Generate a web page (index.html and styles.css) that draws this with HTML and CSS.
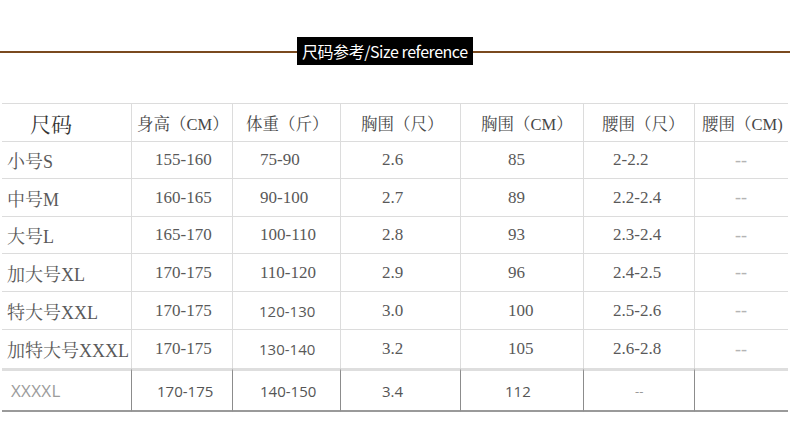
FILE: index.html
```html
<!DOCTYPE html>
<html lang="zh-CN">
<head>
<meta charset="utf-8">
<title>尺码参考</title>
<link rel="stylesheet" href="styles.css">
</head>
<body>
<div class="title-bar">
  <span class="rule rule-left"></span>
  <span class="title">尺码参考/Size reference</span>
  <span class="rule rule-right"></span>
</div>
<table class="size-table">
  <colgroup>
    <col class="w0"><col class="w1"><col class="w2"><col class="w3"><col class="w4"><col class="w5"><col class="w6">
  </colgroup>
  <thead>
    <tr>
      <th class="big">尺码</th>
      <th>身高（CM）</th>
      <th>体重（斤）</th>
      <th>胸围（尺）</th>
      <th>胸围（CM）</th>
      <th>腰围（尺）</th>
      <th>腰围（CM)</th>
    </tr>
  </thead>
  <tbody>
    <tr class="r-a"><td>小号S</td><td>155-160</td><td>75-90</td><td>2.6</td><td>85</td><td>2-2.2</td><td class="dash">--</td></tr>
    <tr class="r-b"><td>中号M</td><td>160-165</td><td>90-100</td><td>2.7</td><td>89</td><td>2.2-2.4</td><td class="dash">--</td></tr>
    <tr class="r-a"><td>大号L</td><td>165-170</td><td>100-110</td><td>2.8</td><td>93</td><td>2.3-2.4</td><td class="dash">--</td></tr>
    <tr class="r-b"><td>加大号XL</td><td>170-175</td><td>110-120</td><td>2.9</td><td>96</td><td>2.4-2.5</td><td class="dash">--</td></tr>
    <tr class="r-b"><td>特大号XXL</td><td>170-175</td><td class="sans">120-130</td><td>3.0</td><td>100</td><td>2.5-2.6</td><td class="dash">--</td></tr>
    <tr class="r-b r-pre"><td>加特大号XXXL</td><td>170-175</td><td class="sans">130-140</td><td>3.2</td><td>105</td><td>2.6-2.8</td><td class="dash">--</td></tr>
    <tr class="last"><td class="faint">XXXXL</td><td>170-175</td><td>140-150</td><td>3.4</td><td>112</td><td class="ldash">--</td><td></td></tr>
  </tbody>
</table>
</body>
</html>
```

FILE: styles.css
```css
html, body {
  margin: 0;
  padding: 0;
  background: #ffffff;
}

body {
  width: 790px;
  height: 444px;
  overflow: hidden;
}

.title-bar {
  display: flex;
  align-items: center;
  padding-top: 37px;
  height: 28px;
}

.rule {
  height: 2px;
  margin-top: 2px;
  background: #7a4a1f;
}

.rule-left {
  width: 297px;
}

.rule-right {
  flex: 1;
}

.title {
  display: flex;
  align-items: center;
  height: 28px;
  padding: 0 5px 0 5px;
  background: #000000;
  color: #ffffff;
  font-family: "Noto Sans CJK SC", "Noto Sans", sans-serif;
  font-size: 16px;
  letter-spacing: -0.45px;
  white-space: nowrap;
}

.size-table {
  margin: 38px 0 0 2px;
  width: 786px;
  table-layout: fixed;
  border-collapse: separate;
  border-spacing: 0;
  border-top: 1px solid #dcdcdc;
  font-family: "Liberation Serif", "Noto Serif CJK SC", "Noto Sans CJK SC", serif;
  color: #595959;
}

.w0 { width: 130px; }
.w1 { width: 101px; }
.w2 { width: 108px; }
.w3 { width: 120px; }
.w4 { width: 123px; }
.w5 { width: 111px; }
.w6 { width: 93px; }

.size-table th,
.size-table td {
  box-sizing: border-box;
  padding: 0;
  text-align: left;
  vertical-align: middle;
  white-space: nowrap;
  border-bottom: 1px solid #dcdcdc;
  border-right: 1px solid #dcdcdc;
}

.size-table th:last-child,
.size-table td:last-child {
  border-right: none;
}

.size-table th {
  height: 38px;
  font-weight: normal;
  font-size: 16.5px;
  color: #474747;
}

.size-table th.big {
  font-size: 21px;
  color: #333333;
}

.size-table th:nth-child(1) { padding-left: 28px; }
.size-table th:nth-child(2) { padding-left: 5px; }
.size-table th:nth-child(3) { padding-left: 13px; }
.size-table th:nth-child(4) { padding-left: 20px; }
.size-table th:nth-child(5) { padding-left: 20px; }
.size-table th:nth-child(6) { padding-left: 18px; }
.size-table th:nth-child(7) { padding-left: 7px; }

.size-table td {
  font-size: 17px;
}

.size-table tr.r-a td { height: 37px; }
.size-table tr.r-b td { height: 38px; }
.size-table tr.r-pre td { border-bottom: none; }

.size-table td:nth-child(1) { padding-left: 5px; font-size: 18px; }
.size-table td:nth-child(2) { padding-left: 23px; }
.size-table td:nth-child(3) { padding-left: 27px; }
.size-table td:nth-child(4) { padding-left: 41px; }
.size-table td:nth-child(5) { padding-left: 47px; }
.size-table td:nth-child(6) { padding-left: 29px; }
.size-table td:nth-child(7) { padding-left: 40px; }

.size-table td.sans {
  font-family: "Open Sans", "Noto Sans", sans-serif;
  font-size: 15px;
  padding-left: 26px;
}

.size-table td.dash {
  color: #b4b4b4;
  font-size: 18px;
}

.size-table tr.last td {
  height: 44px;
  font-family: "Open Sans", "Noto Sans", sans-serif;
  font-size: 15px;
  color: #555555;
  border-top: 3px solid #dedede;
  border-right-color: #8c8c8c;
  border-bottom: 2px solid #9a9a9a;
}

.size-table tr.last td:last-child { border-right: none; }

.size-table tr.last td:nth-child(1) { padding-left: 9px; font-size: 17px; }
.size-table tr.last td:nth-child(2) { padding-left: 25px; }
.size-table tr.last td:nth-child(3) { padding-left: 27px; }
.size-table tr.last td:nth-child(4) { padding-left: 41px; }
.size-table tr.last td:nth-child(5) { padding-left: 44px; }

.size-table tr.last td.ldash {
  padding-left: 51px;
  color: #999999;
  font-size: 13px;
}

.size-table tr.last td.faint {
  color: #9c9c9c;
  letter-spacing: 0.3px;
}
```
